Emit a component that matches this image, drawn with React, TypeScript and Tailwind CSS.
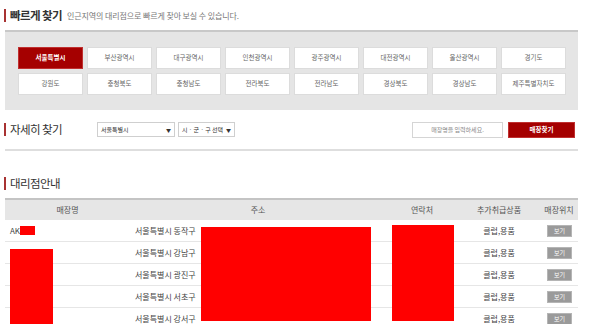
import React from "react";

const regions1 = ["서울특별시", "부산광역시", "대구광역시", "인천광역시", "광주광역시", "대전광역시", "울산광역시", "경기도"];
const regions2 = ["강원도", "충청북도", "충청남도", "전라북도", "전라남도", "경상북도", "경상남도", "제주특별자치도"];

const rows = [
  { addr: "서울특별시 동작구" },
  { addr: "서울특별시 강남구" },
  { addr: "서울특별시 광진구" },
  { addr: "서울특별시 서초구" },
  { addr: "서울특별시 강서구" },
];

function Heading({ children, bold }: { children: React.ReactNode; bold?: boolean }) {
  return (
    <div className="flex items-center h-[15px] ml-[4px]">
      <div className="w-[2px] h-[13px] bg-[#a83232]" />
      <span
        className={`ml-[4px] text-[11.5px] leading-[15px] tracking-[-0.6px] text-[#333] ${bold ? "font-bold" : "font-normal"}`}
      >
        {children}
      </span>
    </div>
  );
}

export default function App() {
  return (
    <div
      className="relative w-[600px] h-[324px] overflow-hidden bg-white"
      style={{ fontFamily: '"Noto Sans CJK KR", "Noto Sans", sans-serif' }}
    >
      <div className="pt-[8px]">
        <div className="flex items-center h-[15px] ml-[4px]">
          <div className="w-[2px] h-[13px] bg-[#a83232]" />
          <span className="ml-[4px] text-[11.5px] leading-[15px] tracking-[-0.6px] font-bold text-[#333]">빠르게 찾기</span>
          <span className="ml-[5px] text-[8px] leading-[15px] text-[#777] tracking-[-0.1px]">
            인근지역의 대리점으로 빠르게 찾아 보실 수 있습니다.
          </span>
        </div>

        <div className="mt-[7px] ml-[5px] w-[573px] h-[80px] border-t-2 border-[#c8c8c8] bg-[#e5e5e5] pt-[15px] pl-[13px]">
          <div className="grid grid-cols-[repeat(8,65px)] gap-x-[4px] gap-y-[4px]">
            {[...regions1, ...regions2].map((r, i) => (
              <div
                key={r}
                className={`h-[22px] flex items-center justify-center text-[6.5px] border ${
                  i === 0
                    ? "bg-[#a50000] border-[#c03030] text-white font-bold"
                    : "bg-white border-[#dcdcdc] text-[#666]"
                }`}
              >
                {r}
              </div>
            ))}
          </div>
        </div>

        <div className="mt-[11px] w-[575px] h-[17px] flex items-center">
          <div className="w-[97px] flex">
            <div className="flex items-center h-[15px] ml-[4px]">
              <div className="w-[2px] h-[13px] bg-[#a83232]" />
              <span className="ml-[4px] text-[11.5px] leading-[15px] tracking-[-0.6px] text-[#333]">자세히 찾기</span>
            </div>
          </div>
          <div className="w-[78px] h-[15px] border border-[#cfcfcf] bg-white flex items-center justify-between px-[3px] text-[6px] text-[#333]">
            <span>서울특별시</span>
            <span className="text-[5px]">▼</span>
          </div>
          <div className="ml-[3px] w-[57px] h-[15px] border border-[#cfcfcf] bg-white flex items-center justify-between px-[3px] text-[6px] text-[#333]">
            <span>시 · 군 · 구 선택</span>
            <span className="text-[5px]">▼</span>
          </div>
          <div className="ml-auto w-[91px] h-[16px] border border-[#d5d5d5] bg-white flex items-center justify-center text-[6px] text-[#888]">
            매장명을 입력하세요.
          </div>
          <div className="ml-[5px] w-[67px] h-[16px] bg-[#a50000] border border-[#c03030] flex items-center justify-center text-[6.5px] font-bold text-white">
            매장찾기
          </div>
        </div>

        <div className="mt-[11px] ml-[5px] w-[573px] h-[2px] bg-[#dedede]" />

        <div className="mt-[25px]">
          <Heading>대리점안내</Heading>
        </div>

        <div className="relative mt-[7px] ml-[5px] w-[573px]">
          <div className="grid grid-cols-[125px_256px_72px_82px_38px] h-[22px] bg-[#e6e6e6] border-t-2 border-[#c4c4c4] text-[8px] text-[#555] items-center text-center">
            <div>매장명</div>
            <div>주소</div>
            <div>연락처</div>
            <div>추가취급상품</div>
            <div>매장위치</div>
          </div>
          {rows.map((row, i) => (
            <div
              key={i}
              className="grid grid-cols-[125px_256px_72px_82px_38px] h-[22px] border-b border-[#e6e6e6] text-[8px] text-[#444] items-center"
            >
              <div className="pl-[5px] flex items-center">
                {i === 0 && (
                  <>
                    <span>AK</span>
                    <span className="inline-block w-[15px] h-[9px] bg-[#ff0000]" />
                  </>
                )}
              </div>
              <div className="pl-[5px] whitespace-nowrap">{row.addr}</div>
              <div />
              <div className="text-center">클럽,용품</div>
              <div className="flex justify-start">
                <div className="ml-[7px] w-[25px] h-[12px] bg-[#9a9a9a] border border-[#b5b5b5] text-white text-[6px] flex items-center justify-center">
                  보기
                </div>
              </div>
            </div>
          ))}

          <div className="absolute left-[5px] top-[51px] w-[43px] h-[80px] bg-[#ff0000]" />
          <div className="absolute left-[196px] top-[29px] w-[170px] h-[94px] bg-[#ff0000]" />
          <div className="absolute left-[387px] top-[27px] w-[62px] h-[96px] bg-[#ff0000]" />
        </div>
      </div>
    </div>
  );
}
